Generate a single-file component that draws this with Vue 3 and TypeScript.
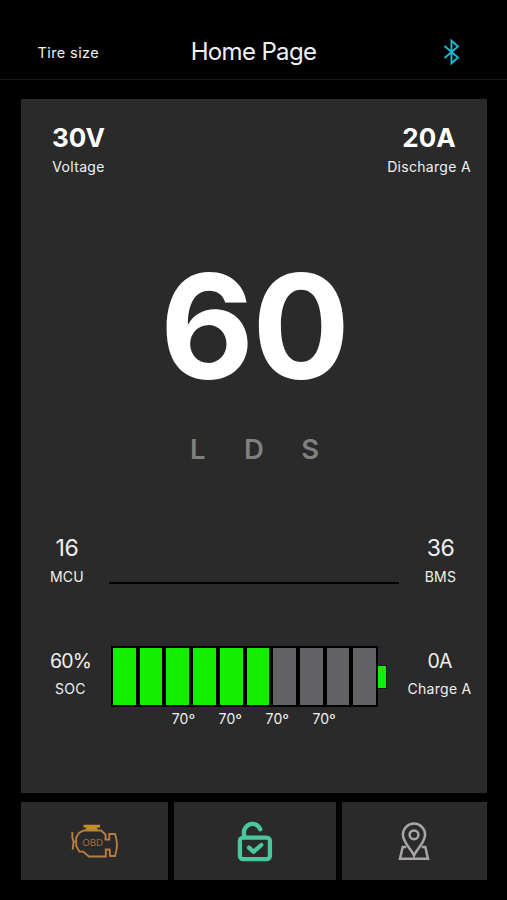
<script setup lang="ts">
interface Reading {
  value: string
  label: string
}

const voltage: Reading = { value: '30V', label: 'Voltage' }
const discharge: Reading = { value: '20A', label: 'Discharge A' }
const mcu: Reading = { value: '16', label: 'MCU' }
const bms: Reading = { value: '36', label: 'BMS' }
const soc: Reading = { value: '60%', label: 'SOC' }
const charge: Reading = { value: '0A', label: 'Charge A' }

const speed = 60
const gears: string[] = ['L', 'D', 'S']
const filledCells = 6
const totalCells = 10
const temperatures: number[] = [70, 70, 70, 70]
</script>

<template>
  <div class="screen">
    <header class="header">
      <span class="tire">Tire size</span>
      <h1 class="title">Home Page</h1>
      <svg class="bluetooth" viewBox="0 0 18 28" width="18" height="28">
        <path d="M2.500 8 L16 19.500 L9.500 25.300 V2.700 L16 8.500 L2.500 20" />
      </svg>
    </header>

    <main class="panel">
      <section class="row top-row">
        <div class="reading voltage">
          <div class="strong">{{ voltage.value }}</div>
          <div class="label">{{ voltage.label }}</div>
        </div>
        <div class="reading discharge">
          <div class="strong">{{ discharge.value }}</div>
          <div class="label">{{ discharge.label }}</div>
        </div>
      </section>

      <div class="speed">{{ speed }}</div>

      <div class="gears">
        <span v-for="gear in gears" :key="gear">{{ gear }}</span>
      </div>

      <section class="row temp-row">
        <div class="reading mcu">
          <div class="medium">{{ mcu.value }}</div>
          <div class="label">{{ mcu.label }}</div>
        </div>
        <div class="rule"></div>
        <div class="reading bms">
          <div class="medium">{{ bms.value }}</div>
          <div class="label">{{ bms.label }}</div>
        </div>
      </section>

      <section class="row battery-row">
        <div class="reading soc">
          <div class="small">{{ soc.value }}</div>
          <div class="label">{{ soc.label }}</div>
        </div>
        <div class="battery-block">
          <div class="battery">
            <div class="cells">
              <i v-for="n in totalCells" :key="n" class="cell" :class="{ on: n <= filledCells }"></i>
            </div>
            <div class="nub"></div>
          </div>
          <div class="temperatures">
            <span v-for="(t, i) in temperatures" :key="i">{{ t }}º</span>
          </div>
        </div>
        <div class="reading charge">
          <div class="small">{{ charge.value }}</div>
          <div class="label">{{ charge.label }}</div>
        </div>
      </section>
    </main>

    <nav class="tiles">
      <button class="tile" aria-label="Diagnostics">
        <svg class="engine" viewBox="0 0 50 36" width="50" height="36">
          <path class="cap" d="M14.500 1.800 H31 V4.600 H28 L29 7.500 H16 L17.500 4.600 H14.500 Z" />
          <path class="outline" d="M14.500 7.500 H32 L36.500 11.500 V16.500 H40.300 V11 H46 Q50 21.500 46 33 H41 L40.600 26.500 H36.800 V33.500 H19.800 L14.300 28.600 H10.300 L7.200 23 V14.500 L10 10 Z" />
          <path class="fan" d="M3.300 9 V14.500 L4.600 18.600 L3.700 26.500 M7.200 18.600 H4.600" />
          <text x="23.700" y="22.700" text-anchor="middle">OBD</text>
        </svg>
      </button>
      <button class="tile" aria-label="Unlock">
        <svg class="lock" viewBox="0 0 36 42" width="36" height="42">
          <rect x="2.900" y="17.600" width="30" height="21.500" rx="3.200" />
          <path d="M7.500 16.500 C5.200 9.800 9.500 3.900 15.600 3.900 Q20.800 3.900 23.200 9.200" />
          <path d="M12 27.600 L16.500 31.800 L24.300 25" />
        </svg>
      </button>
      <button class="tile" aria-label="Location">
        <svg class="pin" viewBox="0 0 32 40" width="32" height="40">
          <path d="M16 34.500 C13.500 28.500 4.900 21 4.900 13.700 A11.100 11.100 0 0 1 27.100 13.700 C27.100 21 18.500 28.500 16 34.500 Z" />
          <circle cx="16" cy="13.800" r="4.400" />
          <path d="M8.200 26 H4.700 L2 37.700 H30 L27.300 26 H23.800" />
        </svg>
      </button>
    </nav>
  </div>
</template>

<style>
body {
  background: #000;
}
</style>

<style scoped>
.screen {
  box-sizing: border-box;
  width: 507px;
  height: 900px;
  overflow: hidden;
  background: #000;
  color: #f0f0f0;
  font-family: Inter, "Liberation Sans", sans-serif;
}

.header {
  box-sizing: border-box;
  display: grid;
  grid-template-columns: 115px 1fr 115px;
  align-items: center;
  height: 80px;
  padding-top: 24px;
  border-bottom: 1px solid #191919;
}

.tire {
  padding-left: 37.500px;
  padding-top: 2px;
  font-size: 14.500px;
  line-height: 20px;
  letter-spacing: 0.400px;
  white-space: nowrap;
}

.title {
  margin: 0;
  font-size: 24px;
  line-height: 30px;
  font-weight: 400;
  letter-spacing: -0.650px;
  text-align: center;
}

.bluetooth {
  margin-left: 50px;
  margin-top: 1px;
  fill: none;
  stroke: #1cb9d0;
  stroke-width: 1.900;
}

.panel {
  box-sizing: border-box;
  width: 466px;
  height: 694px;
  margin: 19px 0 0 21px;
  padding-top: 24px;
  background: #2a2a2a;
}

.row {
  display: flex;
}

.reading {
  flex: none;
  text-align: center;
  white-space: nowrap;
}

.label {
  font-size: 14px;
  line-height: 20px;
  letter-spacing: 0.300px;
}

.strong {
  margin-bottom: 4px;
  color: #fff;
  font-size: 26px;
  line-height: 30px;
  font-weight: 700;
}

.medium {
  margin-bottom: 5px;
  font-size: 23px;
  line-height: 28px;
  letter-spacing: -0.400px;
}

.small {
  margin-bottom: 6px;
  font-size: 19.500px;
  line-height: 24px;
  letter-spacing: -0.800px;
}

.top-row {
  justify-content: space-between;
}

.voltage {
  width: 115px;
}

.discharge {
  width: 116px;
}

.speed {
  height: 140px;
  margin-top: 80px;
  color: #fff;
  font-size: 145px;
  line-height: 140px;
  font-weight: 700;
  letter-spacing: -2px;
  text-align: center;
}

.gears {
  display: flex;
  justify-content: center;
  margin-top: 37px;
  color: #808080;
  font-size: 27.500px;
  line-height: 30px;
  font-weight: 600;
}

.gears span {
  width: 56.200px;
  text-align: center;
}

.temp-row {
  margin-top: 70px;
}

.mcu {
  width: 92px;
}

.bms {
  width: 93px;
  margin-left: -5px;
}

.rule {
  flex: none;
  width: 290px;
  height: 2px;
  margin-left: -4px;
  margin-top: 48px;
  background: #000;
}

.battery-row {
  margin-top: 59px;
}

.soc {
  width: 99px;
  margin-right: -9px;
  padding-top: 3px;
}

.charge {
  width: 95px;
  padding-top: 3px;
}

.battery-block {
  flex: 1;
}

.battery {
  display: flex;
  align-items: center;
}

.cells {
  box-sizing: border-box;
  display: grid;
  grid-template-columns: repeat(10, 1fr);
  gap: 4px;
  width: 267px;
  height: 61px;
  padding: 2px;
  background: #000;
}

.cell {
  background: #636366;
}

.cell.on {
  background: #14ee00;
}

.nub {
  width: 8px;
  height: 22px;
  border: 1px solid #071b05;
  border-left: 0;
  background: #14ee00;
}

.temperatures {
  display: flex;
  margin-top: 2px;
  padding-left: 49px;
  font-size: 14px;
  line-height: 20px;
  letter-spacing: 0.200px;
}

.temperatures span {
  width: 46.900px;
  text-align: center;
}

.tiles {
  display: grid;
  grid-template-columns: 147px 162px 145px;
  gap: 6px;
  margin: 9px 0 0 21px;
}

.tile {
  display: flex;
  align-items: center;
  justify-content: center;
  height: 78px;
  padding: 0;
  border: 0;
  background: #2a2a2a;
}

.tile svg {
  fill: none;
}

.engine {
  margin-right: 1px;
}

.engine .outline,
.engine .fan {
  stroke: #b87d42;
  stroke-width: 1.900;
}

.engine .cap {
  fill: #c09222;
}

.engine text {
  fill: #aa7240;
  font-family: "Open Sans", sans-serif;
  font-size: 9.800px;
}

.lock {
  margin-right: 1px;
  stroke: #4bc7a0;
  stroke-width: 4.300;
  stroke-linecap: round;
  stroke-linejoin: round;
}

.pin {
  margin-right: 1px;
  stroke: #aaa5a5;
  stroke-width: 2.500;
}
</style>
